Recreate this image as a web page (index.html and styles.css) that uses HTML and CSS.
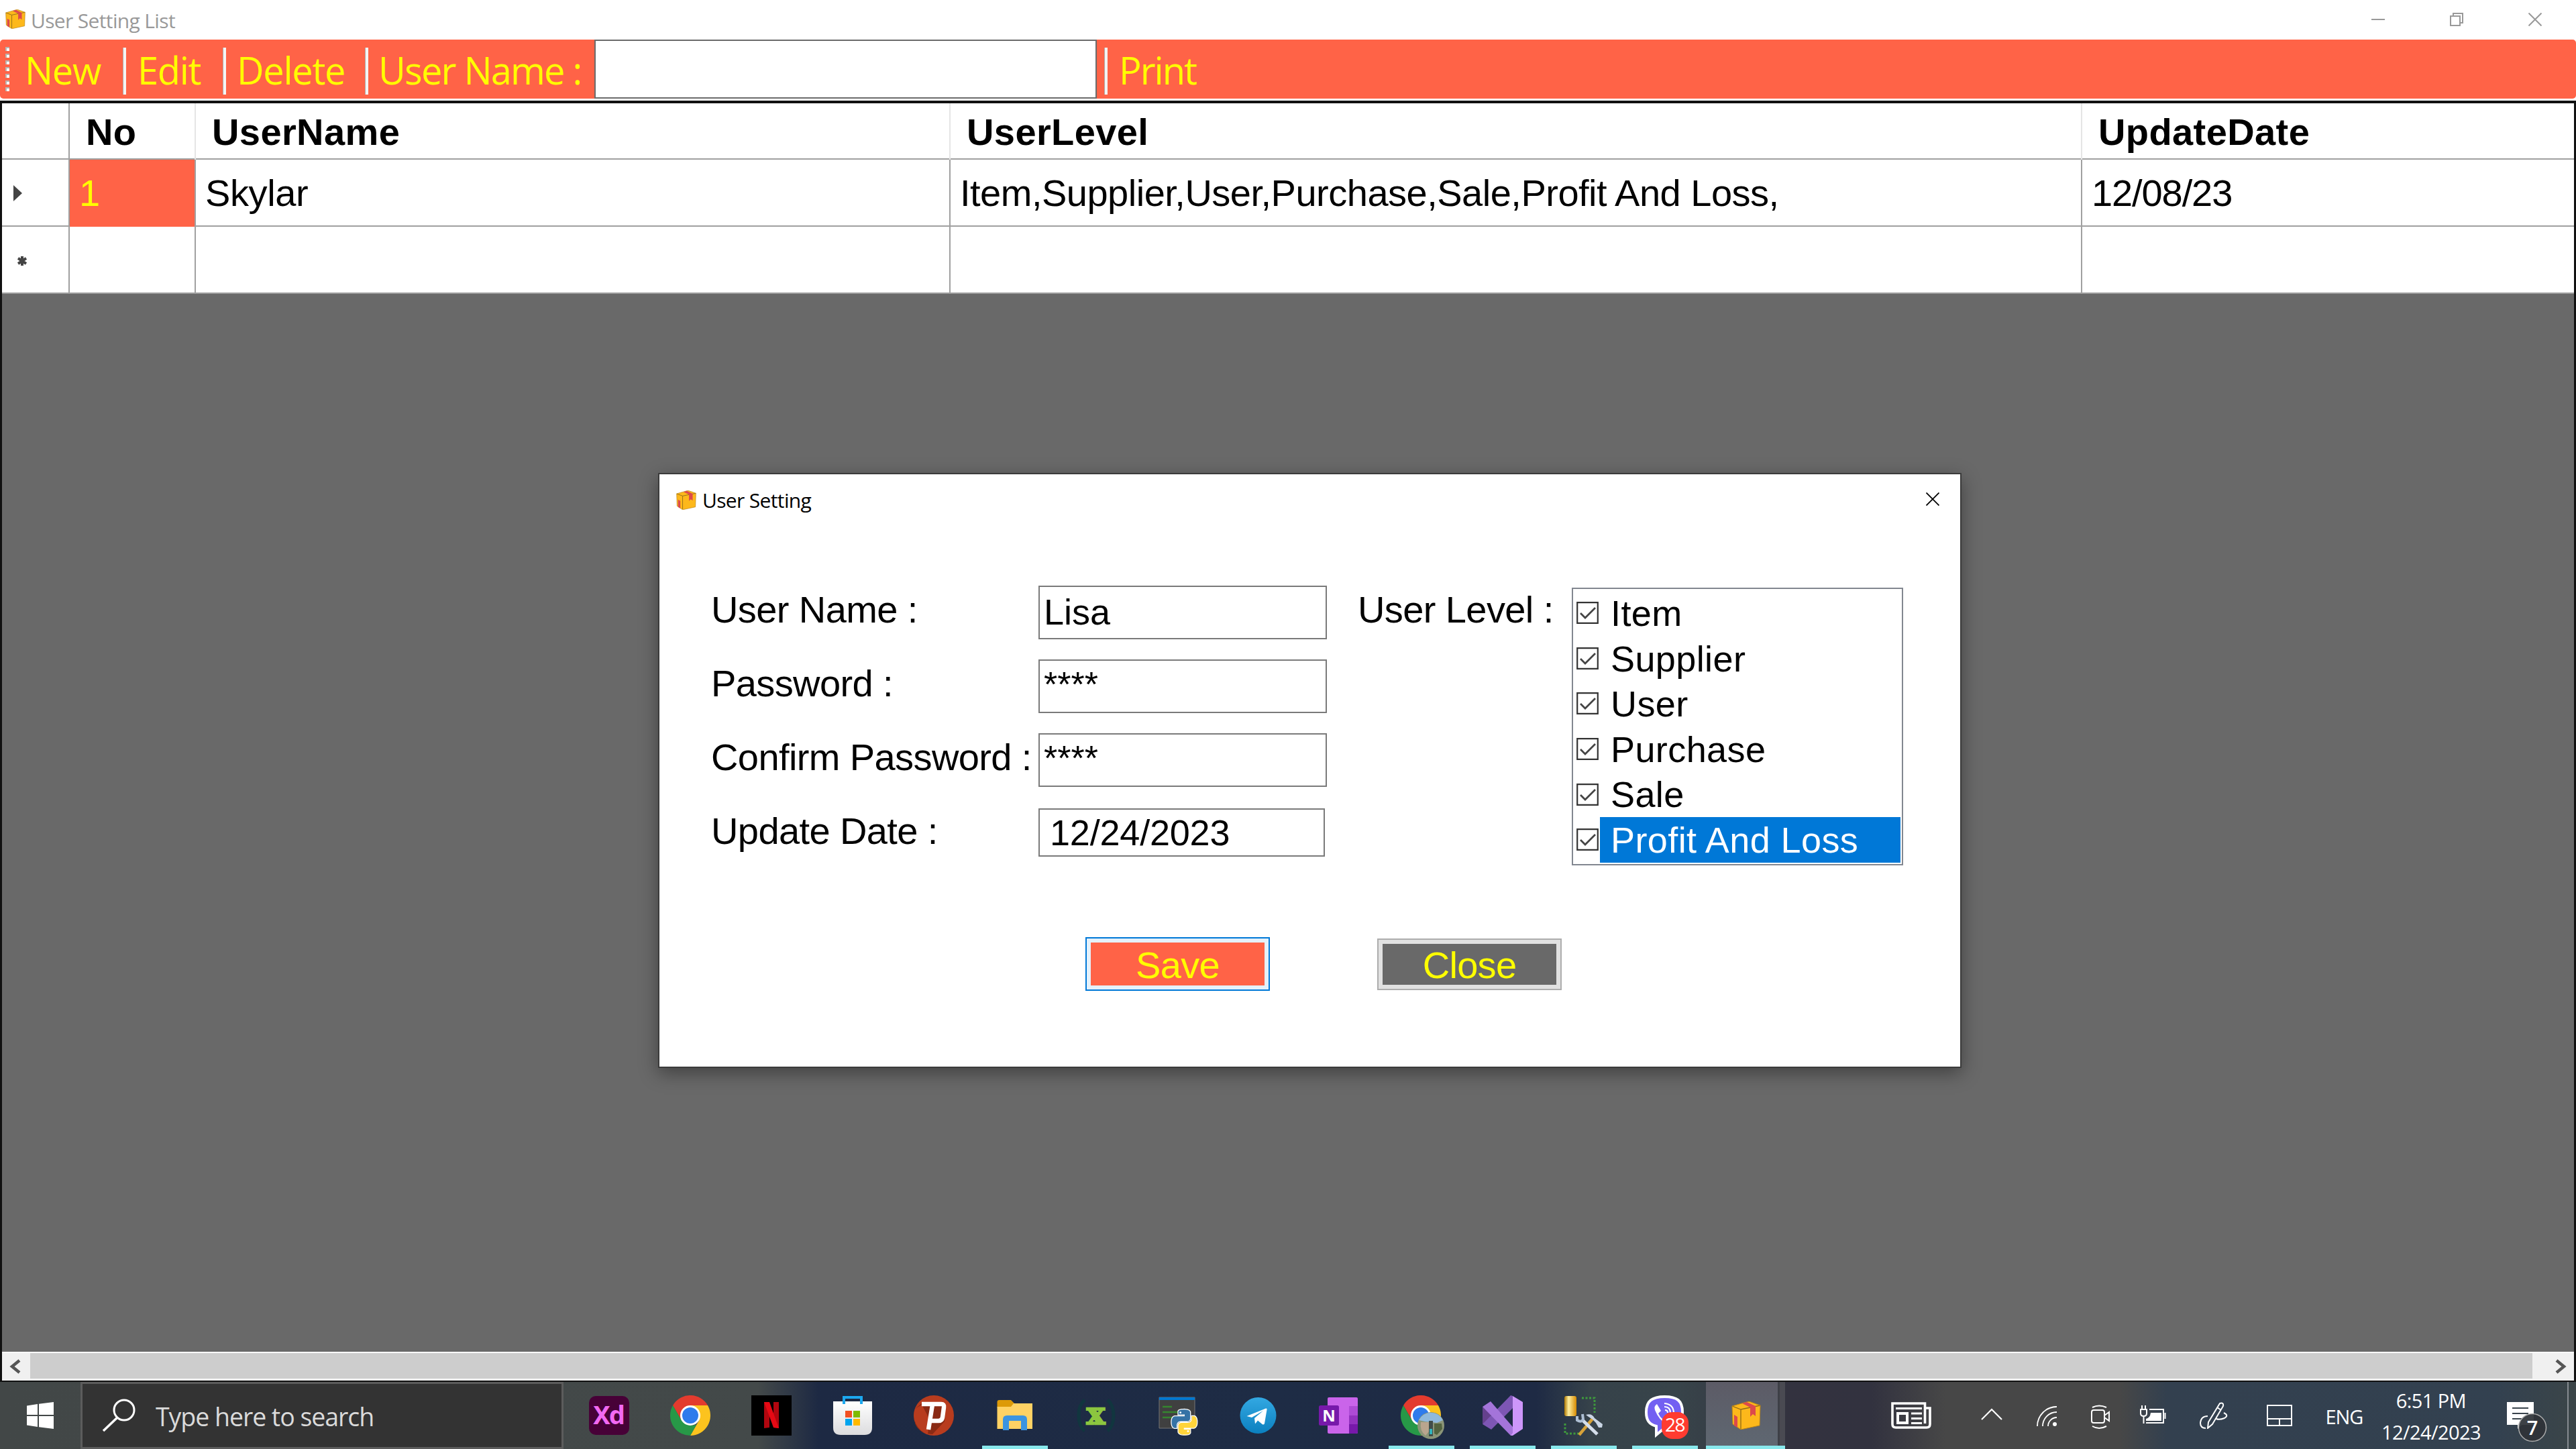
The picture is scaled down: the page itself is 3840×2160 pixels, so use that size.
FILE: index.html
```html
<!DOCTYPE html>
<html lang="en">
<head>
<meta charset="utf-8">
<title>User Setting List</title>
<link rel="stylesheet" href="styles.css">
</head>
<body>
<svg class="defs" width="0" height="0" aria-hidden="true">
  <symbol id="package" viewBox="0 0 44 42">
    <path d="M1 7 26 0l17 6-1 30-28 6L2 34z" fill="#fdb81b"/>
    <path d="M1 7 14 12l29-6M14 12v29" fill="none" stroke="#8d6a18" stroke-width="1.3"/>
    <path d="M1 7 26 0l17 6-1 30-28 6L2 34z" fill="none" stroke="#b98518" stroke-width="1"/>
    <path d="M16 3l7-2 13 6v15l-4-3-4 4V9z" fill="#dc4a4c"/>
    <path d="M4 20l5 3v16l-5-3z" fill="#dc4a4c"/>
  </symbol>
  <symbol id="check" viewBox="0 0 33 33">
    <path d="M1.2 1.2h30.6v30.6H1.2z" fill="#fff" stroke="#333" stroke-width="2.2"/>
    <path d="M6 17l7 7L28 9" fill="none" stroke="#444" stroke-width="2.8"/>
  </symbol>
  <symbol id="chrome" viewBox="0 0 60 60">
    <path d="M4 15A30 30 0 0 1 56 15H30L17 37.500z" fill="#e33b2e"/>
    <path d="M56 15A30 30 0 0 1 30 60L43 37.500 30 15z" fill="#fcc31e"/>
    <path d="M30 60A30 30 0 0 1 4 15L17 37.500l13 7.500 9-1z" fill="#279847"/>
    <circle cx="30" cy="30" r="15" fill="#fff"/>
    <circle cx="30" cy="30" r="12" fill="#2f7bec"/>
  </symbol>
</svg>

<div class="desktop">
  <header class="titlebar">
    <svg class="app-icon"><use href="#package"/></svg>
    <span class="title">User Setting List</span>
    <div class="window-controls">
      <svg width="20" height="20"><path d="M0 10h20" stroke="#999" stroke-width="2"/></svg>
      <svg width="20" height="20"><path d="M1 5h14v14H1zM5 5V1h14v14h-4" fill="none" stroke="#999" stroke-width="2"/></svg>
      <svg width="20" height="20"><path d="M.5.5l19 19M19.500.5l-19 19" stroke="#999" stroke-width="2"/></svg>
    </div>
  </header>

  <nav class="toolbar">
    <div class="grip"><i></i><i></i><i></i><i></i><i></i><i></i><i></i></div>
    <span class="tool new">New</span>
    <span class="tool edit">Edit</span>
    <span class="tool delete">Delete</span>
    <span class="tool filter">User Name :</span>
    <div class="filter-input"></div>
    <span class="tool print">Print</span>
  </nav>

  <main class="grid-area">
    <div class="grid">
      <div class="row head">
        <div class="cell"></div><div class="cell">No</div><div class="cell">UserName</div><div class="cell">UserLevel</div><div class="cell">UpdateDate</div>
      </div>
      <div class="row">
        <div class="cell marker"><svg width="13" height="24"><path d="M0 0l13 12L0 24z" fill="#444"/></svg></div>
        <div class="cell selected">1</div><div class="cell">Skylar</div><div class="cell levels">Item,Supplier,User,Purchase,Sale,Profit And Loss,</div><div class="cell updated">12/08/23</div>
      </div>
      <div class="row">
        <div class="cell marker star"><svg width="14" height="14"><path d="M7 0v14M1 3l12 8M13 3L1 11" stroke="#444" stroke-width="4"/></svg></div>
        <div class="cell"></div><div class="cell"></div><div class="cell"></div><div class="cell"></div>
      </div>
    </div>
    <div class="scrollbar">
      <svg width="42" height="40"><path d="M26 11L15 20l11 9" fill="none" stroke="#555" stroke-width="4.500"/></svg>
      <div class="thumb"></div>
      <svg width="62" height="40"><path d="M36 11l11 9-11 9" fill="none" stroke="#555" stroke-width="4.500"/></svg>
    </div>
  </main>

  <footer class="taskbar">
    <div class="start"><svg width="40" height="40"><path d="M0 5.500L16 3v16H0zM18 2.700L40 0v19H18zM0 21h16v16L0 34.500zM18 21h22v19l-22-2.700z" fill="#fff"/></svg></div>
    <div class="search">
      <svg width="50" height="50"><circle cx="33" cy="17" r="15" fill="none" stroke="#fff" stroke-width="3"/><path d="M23 28L2 48" stroke="#fff" stroke-width="3.500"/></svg>
      <span>Type here to search</span>
    </div>
    <div class="apps">
      <div class="app"><svg viewBox="0 0 60 60"><rect y="1" width="60" height="58" rx="10" fill="#470137"/><text x="29" y="43" class="xd" text-anchor="middle">Xd</text></svg></div>
      <div class="app"><svg><use href="#chrome"/></svg></div>
      <div class="app"><svg viewBox="0 0 60 60"><path d="M0 0h60v60H0z"/><path d="M19 10h8v38l-8 1zM33 10h8v39l-8-1z" fill="#b1060f"/><path d="M19 10h8l14 39-8-1z" fill="#e50914"/></svg></div>
      <div class="app"><svg viewBox="0 0 60 60">
        <defs><linearGradient id="bag" x2="0" y2="1"><stop stop-color="#fff"/><stop offset="1" stop-color="#dcdcde"/></linearGradient></defs>
        <path d="M1 9h58v39q0 11-11 11H12Q1 59 1 48z" fill="url(#bag)"/><path d="M17 13V3h26v10" fill="none" stroke="#1ca8ef" stroke-width="4"/>
        <path d="M19 23h10v10H19z" fill="#f25022"/><path d="M31 23h10v10H31z" fill="#7fba00"/><path d="M19 35h10v10H19z" fill="#00a4ef"/><path d="M31 35h10v10H31z" fill="#ffb900"/></svg></div>
      <div class="app"><svg viewBox="0 0 60 60"><circle cx="30" cy="30" r="30" fill="#b83c1e"/><path d="M2 20L12 12 48 14 46 39 28 58Q8 57 2 42z" fill="#8a2a14"/><path d="M2 20a30 30 0 0 0 19 38l3-22L12 14z" fill="#b83c1e"/><path d="M12 13h29q5 0 4 5l-2 15q-1 5-6 5H26M28 14l-6 37" fill="none" stroke="#fff" stroke-width="6.500"/></svg></div>
      <div class="app open"><svg viewBox="0 0 60 60"><path d="M3.500 10q0-3 3-3H24l5 5-5 6H3.500z" fill="#dd9a08"/><path d="M3.500 17H24l4-5h28v38H3.500z" fill="#ffd264"/><path d="M12 52V36q0-6 6-6h24q6 0 6 6v16h-9V38H21v14z" fill="#3c94e0"/></svg></div>
      <div class="app"><svg viewBox="0 0 60 60"><path d="M13 7Q4 14 4 30t9 23M47 7q9 7 9 23t-9 23" fill="none" stroke="#11363f" stroke-width="5"/><text x="29.500" y="43" class="x-mark" text-anchor="middle">x</text></svg></div>
      <div class="app"><svg viewBox="0 0 60 60"><path d="M3 3h53v46H3z" fill="#404040" stroke="#777"/><path d="M3 3h53v4H3z" fill="#0078d0"/><path d="M8 17h14M8 25h23M8 33h14" stroke="#35852f" stroke-width="2.500"/><g transform="translate(21 20.500) scale(1.610)" stroke="#fff" stroke-width=".8"><path fill="#3572a5" d="M14.250.18l.9.2.73.26.59.3.45.32.34.34.25.34.16.33.1.3.04.26.02.2-.01.13V8.500l-.05.63-.13.55-.21.46-.26.38-.3.31-.33.25-.35.19-.35.14-.33.1-.3.07-.26.04-.21.02H8.770l-.69.05-.59.14-.5.22-.41.27-.33.32-.27.35-.2.36-.15.37-.1.35-.07.32-.04.27-.02.21v3.060H3.170l-.21-.03-.28-.07-.32-.12-.35-.18-.36-.26-.36-.36-.35-.46-.32-.59-.28-.73-.21-.88-.14-1.050-.05-1.230.06-1.220.16-1.040.24-.87.32-.71.36-.57.4-.44.42-.33.42-.24.4-.16.36-.1.32-.05.24-.01h.16l.06.01h8.160v-.83H6.180l-.01-2.750-.02-.37.05-.34.11-.31.17-.28.25-.26.31-.23.38-.2.44-.18.51-.15.58-.12.64-.1.71-.06.77-.04.84-.02 1.270.05z"/><path fill="#ffd43b" d="M21.100 6.110l.28.06.32.12.35.18.36.27.36.35.35.47.32.59.28.73.21.88.14 1.040.05 1.230-.06 1.230-.16 1.040-.24.86-.32.71-.36.57-.4.45-.42.33-.42.24-.4.16-.36.09-.32.05-.24.02-.16-.01h-8.220v.82h5.840l.01 2.760.02.36-.05.34-.11.31-.17.29-.25.25-.31.24-.38.2-.44.17-.51.15-.58.13-.64.09-.71.07-.77.04-.84.01-1.270-.04-1.070-.14-.9-.2-.73-.25-.59-.3-.45-.33-.34-.34-.25-.34-.16-.33-.1-.3-.04-.25-.02-.2.01-.13v-5.340l.05-.64.13-.54.21-.46.26-.38.3-.32.33-.24.35-.2.35-.14.33-.1.3-.06.26-.04.21-.02.13-.01h5.840l.69-.05.59-.14.5-.21.41-.28.33-.32.27-.35.2-.36.15-.36.1-.35.07-.32.04-.28.02-.21V6.070h2.090l.14.01z"/><circle cx="8.500" cy="3.200" r=".9" fill="#fff" stroke="none"/><circle cx="15.500" cy="20.500" r=".9" fill="#fff" stroke="none"/></g></svg></div>
      <div class="app"><svg viewBox="0 0 60 60"><defs><linearGradient id="tg" x2="0" y2="1"><stop stop-color="#33a8e2"/><stop offset="1" stop-color="#0b80bf"/></linearGradient></defs><circle cx="29.500" cy="30" r="27" fill="url(#tg)"/><path d="M12.500 31L41 19.500q2-.5 1.500 2L39 42q-1 2.500-3.500 1L29 37.500 25 42.500l-1-8.500 13-11-17 10z" fill="#fff"/></svg></div>
      <div class="app"><svg viewBox="0 0 60 60"><rect x="12" y="3" width="45" height="54" rx="2" fill="#ca64ea"/><path d="M44 16h13v14H44z" fill="#ae4bd5"/><path d="M44 30h13v13H44z" fill="#9332bf"/><path d="M44 43h13v12q0 2-2 2H44z" fill="#7719aa"/><rect x="-1" y="15" width="30" height="30" rx="2.500" fill="#7719aa"/><text x="14" y="38.500" class="onenote" text-anchor="middle">N</text></svg></div>
      <div class="app open"><svg viewBox="0 0 60 60"><use href="#chrome" width="60" height="60"/><g><circle cx="45" cy="45" r="20" fill="#8b9578"/><path d="M27 37a20 20 0 0 1 36 0l-9 4-18-2z" fill="#8fb9dd"/><path d="M30 40h12v14l-5 6q-9-7-7-20z" fill="#b9a58e"/><path d="M42 38h6v23h-6z" fill="#414d4a"/><path d="M43 50h4v8h-4z" fill="#31b4bd"/><path d="M50 42h11l1 8-8 9-4-2z" fill="#53633f"/></g></svg></div>
      <div class="app open"><svg viewBox="0 0 60 60"><path d="M0 17l12 8v10L0 43z" fill="#65408d"/><path d="M0 43L42 0l3 1v18L13 51z" fill="#7d56b4"/><path d="M0 17l12-8 33 38v12l-3 1z" fill="#a474da"/><path d="M45 1l15 9v40l-15 10h-3l3-4z" fill="#cd96fa"/></svg></div>
      <div class="app open"><svg viewBox="0 0 60 60"><defs><linearGradient id="cyl"><stop stop-color="#ad7600"/><stop offset=".35" stop-color="#fff0a0"/><stop offset="1" stop-color="#d68a00"/></linearGradient></defs><rect x="1" y="1" width="18" height="30" rx="3" fill="url(#cyl)"/><path d="M27 4h19v22M2 42v15h21" fill="none" stroke="#3f9a3c" stroke-width="3" stroke-dasharray="3 2.500"/><path d="M23 59l20-24" stroke="#d7a339" stroke-width="4.500"/><path d="M33 29q9-3 13 5l12 9-1 5-5 0-4-7q-5-6-11-9z" fill="#c9d5e4"/><path d="M27 36l23 22" stroke="#d5deeb" stroke-width="5"/><path d="M20 31v6q6 4 9-1l-1-8" fill="none" stroke="#aebfd4" stroke-width="4"/></svg></div>
      <div class="app open"><svg viewBox="0 0 60 60"><path d="M29.500 2C48 2 56 8 56 25S48 48 30 48l-13 11V46C6 43 2 37 2 25 2 8 11 2 29.500 2z" fill="#7360f2" stroke="#fff" stroke-width="4"/><path d="M18 13q-5 3-3 9 6 15 18 22 5 0 6-5l-7-6-5 3q-5-4-7-9l4-4z" fill="#fff"/><path d="M29 12q14 1 14 15M29 17q9 0 9 9M30 22q4 0 4 4" fill="none" stroke="#fff" stroke-width="2.200"/><rect x="25" y="25" width="40" height="40" rx="16" fill="#ff3b30"/><text x="44.500" y="54" class="count" text-anchor="middle">28</text></svg></div>
      <div class="app open current"><svg class="pkg"><use href="#package"/></svg></div>
    </div>
    <div class="tray">
      <svg class="t-news" viewBox="0 0 60 40"><path d="M50.500 32V2H2v31q0 5 5 5h46q5 0 5-5V9h-6" fill="none" stroke="#fff" stroke-width="3.600"/><path d="M7 9.500h39M30 17h16M30 24.500h16M30 31.500h16" stroke="#fff" stroke-width="3"/><path d="M10 17h14v14H10z" fill="none" stroke="#fff" stroke-width="4"/></svg>
      <svg class="t-chev" viewBox="0 0 32 18"><path d="M1 17L16 2l15 15" fill="none" stroke="#fff" stroke-width="2.200"/></svg>
      <svg class="t-wifi" viewBox="0 0 30 32"><path d="M1 31A29 29 0 0 1 30 2M9 31A21 21 0 0 1 30 10M17 31A13 13 0 0 1 30 18" fill="none" stroke="#fff" stroke-width="1.800"/><circle cx="27" cy="28" r="3" fill="#fff"/></svg>
      <svg class="t-cam" viewBox="0 0 30 38"><rect x="2" y="9" width="19" height="19" rx="3" fill="none" stroke="#fff" stroke-width="2"/><path d="M21 17l7-5v13l-7-5M3 5q10-5 21 0M3 33q10 6 21 0" fill="none" stroke="#fff" stroke-width="2"/></svg>
      <svg class="t-bat" viewBox="0 0 42 28"><path d="M15 6h21v20H10M38.500 11v9M4 0v6M9 0v6M2 6h9v6q0 4-4.500 4T2 12zM6.500 16v11" fill="none" stroke="#fff" stroke-width="2"/><path d="M17 11h16v12H10v-3q6-1 7-9z" fill="#fff"/></svg>
      <svg class="t-pen" viewBox="0 0 42 40"><path d="M30 2q6-2 5 4L19 33l-7 6 1-9zM26 8l6 4M36 16q8 4 1 8-8 3-12 1M12 21Q2 21 1 31q0 8 8 8" fill="none" stroke="#fff" stroke-width="2"/></svg>
      <svg class="t-pad" viewBox="0 0 38 32"><path d="M1 1h36v30H1zM1 21h36M19 21v10" fill="none" stroke="#fff" stroke-width="2"/></svg>
      <span class="lang">ENG</span>
      <div class="clock"><span class="time">6:51 PM</span><span class="date">12/24/2023</span></div>
      <svg class="t-note" viewBox="0 0 60 60"><path d="M0 0h40v34H22l-6 6v-6H0z" fill="#fff"/><path d="M8 9h24M8 17h24M8 25h16" stroke="#3a444c" stroke-width="2.200"/><circle cx="38" cy="38" r="20.500" fill="#2e3338" fill-opacity=".93" stroke="#aaa" stroke-width="1.500"/><text x="38" y="48.500" class="seven" text-anchor="middle">7</text></svg>
      <div class="show-desktop"></div>
    </div>
  </footer>

  <section class="dialog">
    <header class="dialog-title">
      <svg class="app-icon"><use href="#package"/></svg>
      <span>User Setting</span>
      <svg class="dialog-x" width="20" height="20"><path d="M.5.5l19 19M19.500.5l-19 19" stroke="#000" stroke-width="1.800"/></svg>
    </header>
    <div class="form">
      <div class="fields">
        <label>User Name :</label><div class="input">Lisa</div>
        <label>Password :</label><div class="input secret">****</div>
        <label>Confirm Password :</label><div class="input secret">****</div>
        <label>Update Date :</label><div class="input date-input">12/24/2023</div>
      </div>
      <label class="level-label">User Level :</label>
      <ul class="levels-list">
        <li><svg><use href="#check"/></svg><span>Item</span></li>
        <li><svg><use href="#check"/></svg><span>Supplier</span></li>
        <li><svg><use href="#check"/></svg><span>User</span></li>
        <li><svg><use href="#check"/></svg><span>Purchase</span></li>
        <li><svg><use href="#check"/></svg><span>Sale</span></li>
        <li class="active"><svg><use href="#check"/></svg><span>Profit And Loss</span></li>
      </ul>
    </div>
    <div class="actions">
      <div class="button save">Save</div>
      <div class="button close">Close</div>
    </div>
  </section>
</div>
</body>
</html>
```
FILE: styles.css
```css
* { box-sizing: border-box; }

body {
  margin: 0;
  background: #fff;
  font-family: "Liberation Sans", Arial, sans-serif;
  color: #000;
}

svg { display: block; flex: none; }
.defs { position: absolute; }

.desktop {
  position: relative;
  display: flex;
  flex-direction: column;
  width: 3840px;
  height: 2160px;
  overflow: hidden;
  white-space: nowrap;
}

/* Main window */
.titlebar {
  display: flex;
  align-items: center;
  height: 59px;
  padding: 0 51px 2px 8px;
  font: 30px/58px "Open Sans", "Noto Sans", sans-serif;
  color: #999;
}
.app-icon { width: 30px; height: 29px; }
.title { margin-left: 8px; padding-top: 4px; letter-spacing: -.65px; }
.window-controls { display: flex; gap: 97px; margin-left: auto; }

.toolbar {
  display: flex;
  height: 88px;
  background: #ff6347;
  border-radius: 5px;
  font: 56px/88px "Open Sans", "Noto Sans", sans-serif;
  color: #ff0;
}
.grip {
  display: flex;
  flex-direction: column;
  gap: 4px;
  width: 37px;
  padding: 11px 0 0 8px;
}
.grip i {
  width: 6px;
  height: 6px;
  background: #fff;
  border: solid #b9b4b0;
  border-width: 2px 0 0 2px;
}
.tool { position: relative; line-height: 91px; letter-spacing: -1.3px; }
.new { width: 166px; }
.edit { width: 149px; padding-left: 2px; }
.delete { width: 212px; padding-left: 1px; }
.filter { width: 322px; letter-spacing: -1.8px; }
.print { padding-left: 33px; letter-spacing: -2px; }
.edit::before, .delete::before, .filter::before, .print::before {
  content: "";
  position: absolute;
  left: -20px;
  top: 12px;
  width: 4px;
  height: 70px;
  background: #f4f4f4;
  border-left: 1px solid #b3aaa6;
}
.print::before { left: 11px; }
.filter-input {
  width: 749px;
  height: 88px;
  background: #fff;
  border: 2px solid #6b6b6b;
}

.grid-area {
  display: flex;
  flex-direction: column;
  height: 1910px;
  margin-top: 3px;
  background: #696969;
  border: solid #111;
  border-width: 4px 3px 2px;
}
.grid { font-size: 56px; }
.row {
  display: grid;
  grid-template-columns: 101px 188px 1125px 1687px 1fr;
  height: 100px;
  line-height: 100px;
  background: #fff;
  border-bottom: 2px solid #a0a0a0;
  letter-spacing: -.4px;
}
.head { height: 84px; line-height: 85px; font-weight: bold; letter-spacing: .4px; }
.cell { padding-left: 14px; border-right: 2px solid #a0a0a0; }
.cell:last-child { border-right: 0; }
.head .cell { padding-left: 24px; border-right-color: #e5e5e5; }
.head .cell:first-child { border-right-color: #a0a0a0; }
.selected { background: #ff6347; color: #ff0; }
.levels { letter-spacing: -.5px; }
.updated { letter-spacing: -1.1px; }
.marker { display: flex; align-items: center; }
.row .marker { padding-left: 17px; }
.row .star { padding: 4px 0 0 23px; }

.scrollbar {
  display: flex;
  height: 43px;
  margin-top: auto;
  background: #f0f0f0;
  border-top: 2px solid #fff;
}
.thumb { flex: 1; height: 38px; background: #cdcdcd; }

/* Taskbar */
.taskbar {
  display: flex;
  height: 100px;
  font-family: "Open Sans", "Noto Sans", sans-serif;
  color: #fff;
  background: linear-gradient(90deg, #424747 0, #434949 1130px, #1d2943 1220px, #1e2c45 1900px, #1e2a44 2290px, #36424a 2370px, #38444a 2500px, #33323f 2662px, #32323f 2790px, #474747 2900px, #474747 3160px, #33404f 3230px, #334150 3720px, #3b4548 3840px);
}
.start { display: flex; align-items: center; width: 120px; padding-left: 40px; }
.search {
  display: flex;
  align-items: center;
  width: 720px;
  padding-left: 29px;
  background: #333;
  border: 3px solid #5c5c5c;
  font-size: 37.500px;
  color: #dadada;
}
.search span { margin-left: 30px; padding-top: 3px; letter-spacing: -1.05px; }
.apps { display: flex; margin-left: 7px; }
.app { position: relative; display: flex; align-items: center; justify-content: center; width: 121.100px; height: 100px; }
.app svg { width: 60px; height: 60px; overflow: visible; }
.open::after {
  content: "";
  position: absolute;
  left: 12px;
  bottom: 0;
  width: 98px;
  height: 5px;
  background: #88e8ec;
}
.current::before {
  content: "";
  position: absolute;
  left: 1px;
  top: 0;
  width: 118px;
  height: 100px;
  background: linear-gradient(90deg, transparent 107px, #3e4047 107px 110px, #4a4a52 110px), linear-gradient(#5c5b66, #5f6872);
}
.current::after { left: 1px; width: 118px; }
.app .pkg { position: relative; width: 44px; height: 42px; }
.xd { font: bold 38px "Noto Sans", sans-serif; fill: #f269f2; letter-spacing: -2px; }
.x-mark { font: bold 46px "DejaVu Serif", serif; fill: #8cc63f; stroke: #8cc63f; stroke-width: 2.500px; }
.onenote { font: bold 24px "Open Sans", sans-serif; fill: #fff; }
.count { font: 28px "Open Sans", sans-serif; fill: #fff; letter-spacing: -1.500px; }
.seven { font: 600 29px "Open Sans", sans-serif; fill: #fff; }

.tray { display: flex; align-items: center; flex: 1; padding-left: 156px; }
.t-news { width: 60px; height: 40px; }
.t-chev { width: 32px; height: 18px; margin: -4px 0 0 74px; }
.t-wifi { width: 30px; height: 32px; margin: 2px 0 0 51px; }
.t-cam { width: 30px; height: 38px; margin: 3px 0 0 50px; }
.t-bat { width: 42px; height: 28px; margin: -2px 0 0 43px; }
.t-pen { width: 42px; height: 40px; margin-left: 48px; }
.t-pad { width: 38px; height: 32px; margin-left: 58px; }
.lang { width: 66px; margin: 3px 0 0 49px; font-size: 29px; letter-spacing: -1px; }
.clock {
  display: flex;
  flex-direction: column;
  align-items: center;
  width: 180px;
  padding: 1px 0 0 3px;
  font-size: 29px;
  line-height: 47px;
  letter-spacing: -.6px;
}
.t-note { width: 60px; height: 60px; margin: 20px 0 0 25px; }
.show-desktop { width: 2px; height: 100px; margin-left: 30px; background: #858b90; }

/* Dialog window */
.dialog {
  position: absolute;
  left: 981px;
  top: 705px;
  width: 1943px;
  height: 887px;
  background: #fff;
  border: 2px solid #3b3b3b;
  box-shadow: 0 8px 26px rgba(0, 0, 0, .38);
  font-size: 56px;
}
.dialog-title {
  display: flex;
  align-items: center;
  height: 76px;
  padding: 0 31px 0 25px;
  font: 30px/77px "Open Sans", "Noto Sans", sans-serif;
}
.dialog-title span { margin-left: 9px; letter-spacing: -.65px; }
.dialog-x { margin: -3px 0 0 auto; }
.form { display: flex; align-items: flex-start; padding: 75px 0 0 75px; }
.fields {
  display: grid;
  grid-template-columns: 490px 430px;
  grid-auto-rows: 110px;
  align-items: center;
}
label { height: 110px; padding-left: 2px; line-height: 102px; letter-spacing: -.6px; }
.input {
  height: 80px;
  padding-left: 6px;
  border: 2px solid #7a7a7a;
  font-size: 54px;
  line-height: 75px;
}
.secret { font-size: 52px; line-height: 70px; }
.date-input { width: 427px; height: 72px; margin-top: -5px; padding-left: 15px; line-height: 68px; letter-spacing: -.2px; }
.level-label { width: 321px; margin-left: 44px; }
.levels-list {
  width: 494px;
  height: 414px;
  margin: 18px 0 0;
  padding: 2px 2px 0 5px;
  list-style: none;
  border: 2px solid #828790;
  font-size: 54px;
  letter-spacing: .4px;
}
.levels-list li { display: flex; align-items: center; height: 67.600px; }
.levels-list svg { width: 33px; height: 33px; }
.levels-list span { flex: 1; height: 67.600px; margin-left: 2px; padding-left: 16px; line-height: 68px; }
.levels-list .active span { background: #0078d7; color: #fff; }
.actions { display: flex; gap: 160px; padding: 99px 0 0 635px; }
.button {
  width: 275px;
  height: 80px;
  border: 2px solid #0078d7;
  box-shadow: inset 0 0 0 6px #e5f1fb;
  background: #ff6347;
  color: #ff0;
  line-height: 79px;
  letter-spacing: -.7px;
  text-align: center;
}
.close { height: 77px; margin-top: 2px; line-height: 75px; background: #696969; border-color: #adadad; box-shadow: inset 0 0 0 6px #e1e1e1; }
```
